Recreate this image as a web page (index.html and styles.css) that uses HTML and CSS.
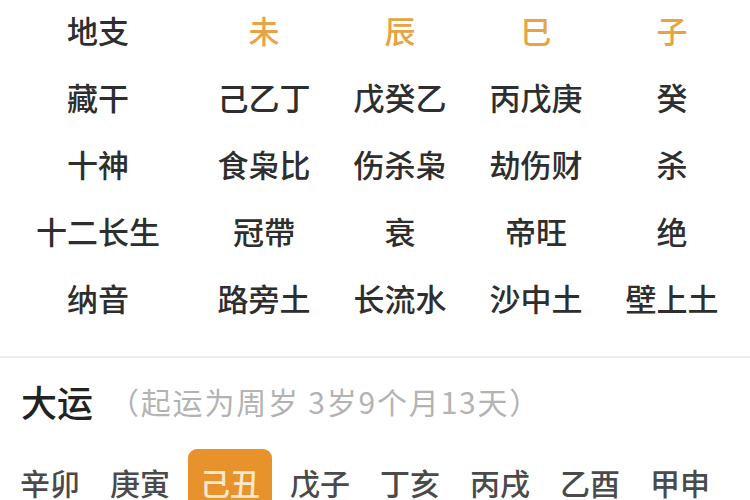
FILE: index.html
```html
<!DOCTYPE html>
<html lang="zh-CN">
<head>
<meta charset="utf-8">
<link rel="stylesheet" href="styles.css">
</head>
<body>
<div class="page">
  <div class="pillars">
    <div class="cell label">地支</div>
    <div class="cell branch">未</div>
    <div class="cell branch">辰</div>
    <div class="cell branch">巳</div>
    <div class="cell branch">子</div>

    <div class="cell label">藏干</div>
    <div class="cell">己乙丁</div>
    <div class="cell">戊癸乙</div>
    <div class="cell">丙戊庚</div>
    <div class="cell">癸</div>

    <div class="cell label">十神</div>
    <div class="cell">食枭比</div>
    <div class="cell">伤杀枭</div>
    <div class="cell">劫伤财</div>
    <div class="cell">杀</div>

    <div class="cell label">十二长生</div>
    <div class="cell">冠帶</div>
    <div class="cell">衰</div>
    <div class="cell">帝旺</div>
    <div class="cell">绝</div>

    <div class="cell label">纳音</div>
    <div class="cell">路旁土</div>
    <div class="cell">长流水</div>
    <div class="cell">沙中土</div>
    <div class="cell">壁上土</div>
  </div>

  <div class="divider"></div>

  <div class="dayun-head">
    <span class="dayun-title">大运</span>
    <span class="dayun-note">（起运为周岁 3岁9个月13天）</span>
  </div>

  <div class="dayun-list">
    <div class="yun">辛卯</div>
    <div class="yun">庚寅</div>
    <div class="yun active">己丑</div>
    <div class="yun">戊子</div>
    <div class="yun">丁亥</div>
    <div class="yun">丙戌</div>
    <div class="yun">乙酉</div>
    <div class="yun">甲申</div>
  </div>
</div>
</body>
</html>
```
FILE: styles.css
```css
html, body {
  margin: 0;
  padding: 0;
  background: #ffffff;
}
body {
  font-family: "Noto Sans CJK SC", "Noto Sans", sans-serif;
  color: #2b2b2b;
  width: 750px;
  height: 500px;
  overflow: hidden;
}
.page {
  display: flex;
  flex-direction: column;
}
.pillars {
  display: grid;
  grid-template-columns: 196px repeat(4, 136px);
  grid-auto-rows: 67px;
  margin-top: -4px;
}
.cell {
  display: flex;
  align-items: center;
  justify-content: center;
  font-size: 31px;
  font-weight: 500;
  line-height: 1;
  color: #2e2e2e;
}
.cell.branch {
  color: #e6a445;
}
.divider {
  margin-top: 25px;
  height: 2px;
  background: #ececee;
}
.dayun-head {
  height: 86px;
  display: flex;
  align-items: center;
  padding-left: 21px;
}
.dayun-title {
  font-size: 36px;
  font-weight: 500;
  line-height: 1;
  color: #222;
}
.dayun-note {
  margin-left: 16px;
  font-size: 30px;
  letter-spacing: 1.8px;
  line-height: 1;
  color: #b3b3b3;
}
.dayun-list {
  display: flex;
  gap: 6px;
  margin-top: 5px;
  padding-left: 8px;
}
.yun {
  width: 84px;
  height: 51px;
  box-sizing: border-box;
  padding-top: 18px;
  flex: none;
  text-align: center;
  font-size: 30px;
  font-weight: 500;
  line-height: 30px;
  color: #4a4a4a;
  border-radius: 9px 9px 0 0;
}
.yun.active {
  background: #e8922c;
  color: #fbe9cf;
}
```
